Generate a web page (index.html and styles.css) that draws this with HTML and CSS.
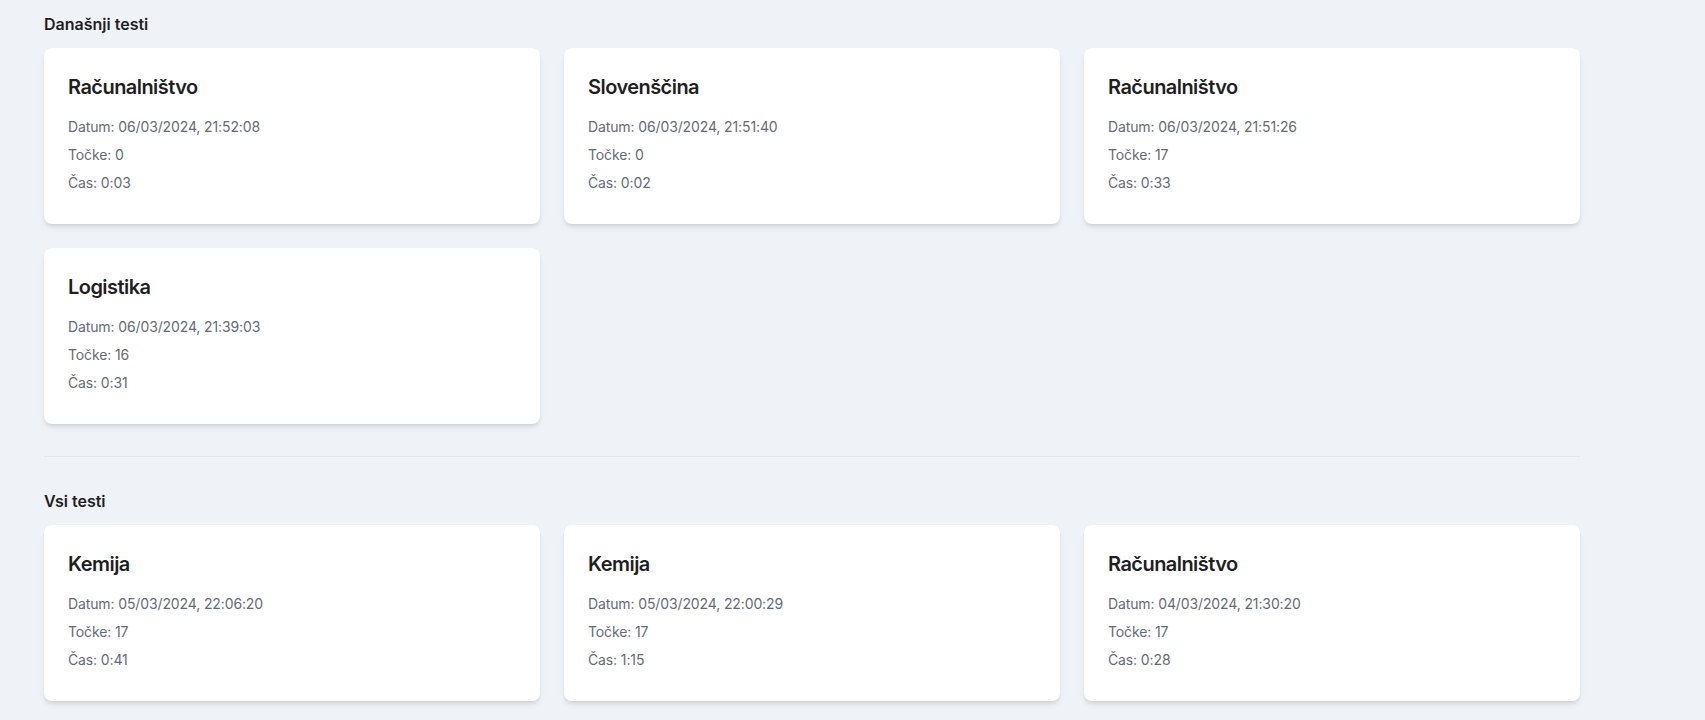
FILE: index.html
```html
<!DOCTYPE html>
<html lang="sl">
<head>
<meta charset="utf-8">
<title>Testi</title>
<link rel="stylesheet" href="styles.css">
</head>
<body>
<main class="page">
  <div class="content">
    <section class="section">
      <h2 class="section-title">Današnji testi</h2>
      <div class="grid">
        <div class="card">
          <h3 class="card-title">Računalništvo</h3>
          <p class="card-line">Datum: 06/03/2024, 21:52:08</p>
          <p class="card-line">Točke: 0</p>
          <p class="card-line">Čas: 0:03</p>
        </div>
        <div class="card">
          <h3 class="card-title">Slovenščina</h3>
          <p class="card-line">Datum: 06/03/2024, 21:51:40</p>
          <p class="card-line">Točke: 0</p>
          <p class="card-line">Čas: 0:02</p>
        </div>
        <div class="card">
          <h3 class="card-title">Računalništvo</h3>
          <p class="card-line">Datum: 06/03/2024, 21:51:26</p>
          <p class="card-line">Točke: 17</p>
          <p class="card-line">Čas: 0:33</p>
        </div>
        <div class="card">
          <h3 class="card-title">Logistika</h3>
          <p class="card-line">Datum: 06/03/2024, 21:39:03</p>
          <p class="card-line">Točke: 16</p>
          <p class="card-line">Čas: 0:31</p>
        </div>
      </div>
    </section>
    <hr class="divider">
    <section class="section">
      <h2 class="section-title">Vsi testi</h2>
      <div class="grid">
        <div class="card">
          <h3 class="card-title">Kemija</h3>
          <p class="card-line">Datum: 05/03/2024, 22:06:20</p>
          <p class="card-line">Točke: 17</p>
          <p class="card-line">Čas: 0:41</p>
        </div>
        <div class="card">
          <h3 class="card-title">Kemija</h3>
          <p class="card-line">Datum: 05/03/2024, 22:00:29</p>
          <p class="card-line">Točke: 17</p>
          <p class="card-line">Čas: 1:15</p>
        </div>
        <div class="card">
          <h3 class="card-title">Računalništvo</h3>
          <p class="card-line">Datum: 04/03/2024, 21:30:20</p>
          <p class="card-line">Točke: 17</p>
          <p class="card-line">Čas: 0:28</p>
        </div>
      </div>
    </section>
  </div>
</main>
</body>
</html>
```
FILE: styles.css
```css
* {
  box-sizing: border-box;
}

html, body {
  margin: 0;
  padding: 0;
}

body {
  background: #eff2f7;
  font-family: Inter, "Noto Sans", "Liberation Sans", sans-serif;
  color: #1f1f23;
}

.page {
  padding: 12px 0 24px 44px;
}

.content {
  width: 1536px;
}

.section-title {
  margin: 0 0 12px;
  font-size: 16px;
  line-height: 24px;
  font-weight: 600;
  color: #1f1f23;
}

.grid {
  display: grid;
  grid-template-columns: repeat(3, 1fr);
  gap: 24px;
}

.card {
  background: #ffffff;
  border-radius: 8px;
  padding: 25px 24px 23px;
  box-shadow: 0 4px 6px -1px rgba(0, 0, 0, 0.1), 0 2px 4px -2px rgba(0, 0, 0, 0.1);
}

.card-title {
  margin: 0 0 16px;
  font-size: 20px;
  line-height: 28px;
  font-weight: 600;
  letter-spacing: -0.55px;
  color: #1f1f23;
}

.card-line {
  margin: 0 0 8px;
  font-size: 14px;
  line-height: 20px;
  letter-spacing: -0.12px;
  color: #666a78;
}

.divider {
  margin: 32px 0;
  border: 0;
  border-top: 1px solid #e2e5ea;
}
```
